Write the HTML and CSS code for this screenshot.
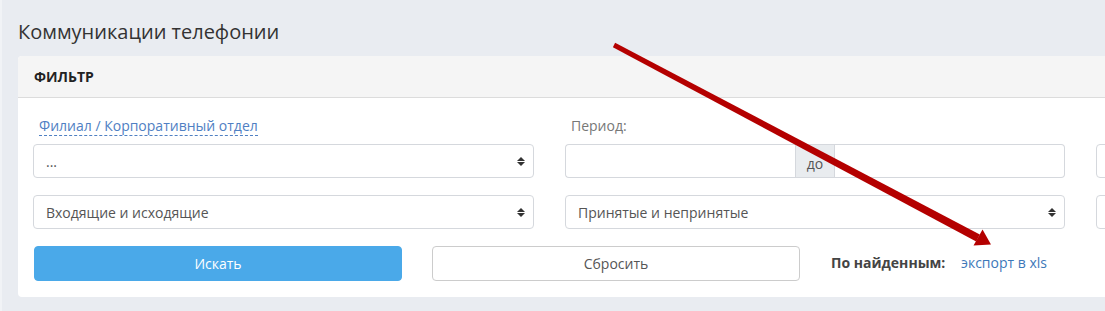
FILE: index.html
```html
<!DOCTYPE html>
<html>
	<head>
		<meta charset="UTF-8">
		<title>Коммуникации телефонии</title>
		<link rel="stylesheet" href="styles.css">
	</head>
	<body>
		<div class="page">
			<h1 class="page-title">Коммуникации телефонии</h1>
			<div class="card">
				<div class="card-head">Фильтр</div>
				<div class="card-body">
					<div class="filter-grid">
						<div class="field">
							<span class="label label-link">Филиал / Корпоративный отдел</span>
						</div>
						<div class="field">
							<span class="label">Период:</span>
						</div>
						<div class="field"></div>

						<div class="select"><span>...</span><i class="caret"></i></div>
						<div class="input-group">
							<div class="input"></div>
							<div class="addon">до</div>
							<div class="input"></div>
						</div>
						<div class="input"></div>

						<div class="select"><span>Входящие и исходящие</span><i class="caret"></i></div>
						<div class="select"><span>Принятые и непринятые</span><i class="caret"></i></div>
						<div class="select"><span></span><i class="caret"></i></div>
					</div>
					<div class="actions">
						<button class="btn btn-primary">Искать</button>
						<button class="btn btn-default">Сбросить</button>
						<div class="export">
							<b>По найденным:</b>
							<a href="#">экспорт в xls</a>
						</div>
					</div>
				</div>
			</div>
		</div>
		<svg class="pointer" width="1105" height="311" viewBox="0 0 1105 311">
			<polygon points="612.9,47.2 615.1,42.8 979.8,234.6 976.2,241.4" fill="#b40000"/>
			<polygon points="991,244.5 982.5,229.5 973.5,245.5" fill="#b40000"/>
		</svg>
	</body>
</html>
```

FILE: styles.css
```css
html, body{
	margin: 0;
	padding: 0;
}
body{
	width: 1105px;
	height: 311px;
	overflow: hidden;
	position: relative;
	background: #e9ecf1;
	border-left: 2px solid #f1f3f6;
	box-sizing: border-box;
	font-family: "Open Sans", "Liberation Sans", sans-serif;
	color: #333;
}
.page{
	padding: 0 0 0 16px;
}
.page-title{
	margin: 0;
	padding: 18px 0 0 0;
	height: 38px;
	font-size: 20px;
	font-weight: 400;
	line-height: 28px;
	color: #333;
}
.card{
	width: 1640px;
	background: #fff;
	border-radius: 4px;
}
.card-head{
	height: 41px;
	line-height: 41px;
	padding: 0 16px;
	background: #f5f5f5;
	border-bottom: 1px solid #dcdcdc;
	border-radius: 4px 4px 0 0;
	font-size: 14px;
	font-weight: 700;
	text-transform: uppercase;
	color: #222;
}
.card-body{
	padding: 16px 15px 16px 15px;
}
.filter-grid{
	display: grid;
	grid-template-columns: 501px 500px 501px;
	grid-template-rows: 13px 34px 34px;
	column-gap: 31px;
	row-gap: 17px;
}
.field{
	padding: 0 6px;
	height: 13px;
}
.label{
	font-size: 14px;
	color: #777;
	line-height: 24px;
}
.label-link{
	color: #4f80c3;
	border-bottom: 1px dashed #4f80c3;
}
.select, .input{
	box-sizing: border-box;
	height: 34px;
	border: 1px solid #d5d8dd;
	border-radius: 4px;
	background: #fff;
	display: flex;
	align-items: center;
	justify-content: space-between;
	padding: 0 12px;
	font-size: 14px;
	color: #555;
}
.caret{
	width: 0;
	height: 9px;
	position: relative;
}
.caret::before, .caret::after{
	content: "";
	position: absolute;
	left: -4px;
	border-left: 4px solid transparent;
	border-right: 4px solid transparent;
}
.caret::before{
	top: 0;
	border-bottom: 4px solid #333;
}
.caret::after{
	bottom: 0;
	border-top: 4px solid #333;
}
.input-group{
	display: flex;
	height: 34px;
}
.input-group .input{
	flex: 1;
}
.input-group .input:first-child{
	border-radius: 4px 0 0 4px;
	border-right: 0;
}
.input-group .input:last-child{
	border-radius: 0 4px 4px 0;
	border-left: 0;
}
.addon{
	box-sizing: border-box;
	width: 40px;
	height: 34px;
	background: #e9ecef;
	border: 1px solid #d5d8dd;
	text-align: center;
	font-size: 14px;
	line-height: 38px;
	color: #555;
}
.actions{
	display: flex;
	align-items: center;
	margin-top: 17px;
}
.btn{
	width: 368px;
	height: 35px;
	margin-right: 30px;
	border-radius: 4px;
	font-family: inherit;
	font-size: 14px;
	cursor: pointer;
}
.btn-primary{
	background: #4aa9e9;
	border: 1px solid #4aa9e9;
	color: #fff;
	margin-left: 1px;
}
.btn-default{
	background: #fff;
	border: 1px solid #ccc;
	color: #555;
	margin-right: 31px;
}
.export{
	font-size: 14px;
	color: #444;
	padding-bottom: 3px;
}
.export b{
	margin-right: 12px;
}
.export a{
	color: #3d78b9;
	text-decoration: none;
}
.pointer{
	position: absolute;
	left: -2px;
	top: 0;
	pointer-events: none;
}
```
